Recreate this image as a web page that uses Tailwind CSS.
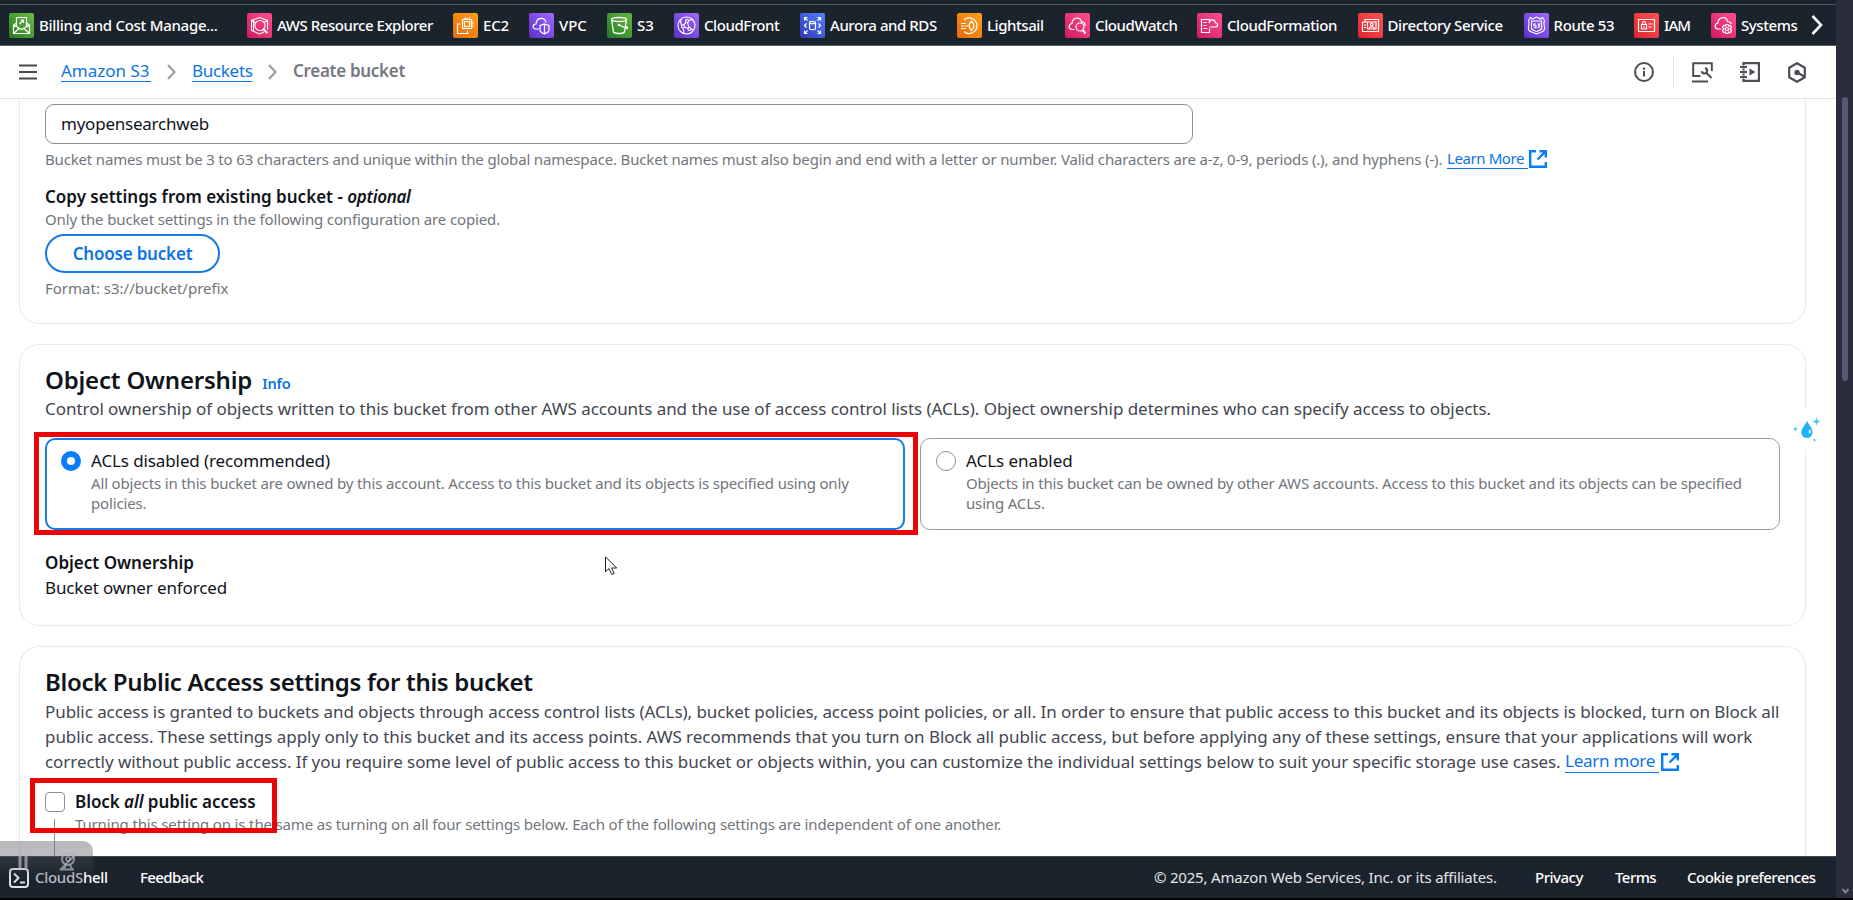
<!DOCTYPE html>
<html lang="en">
<head>
<meta charset="utf-8">
<title>Create bucket - S3</title>
<script src="https://cdn.jsdelivr.net/npm/@tailwindcss/browser@4"></script>
</head>
<body class="w-[1853px] h-[900px] overflow-hidden bg-black font-['Noto_Sans',sans-serif] text-[#0f141a]">
<div class="relative flex h-[900px]">
<div class="flex w-[1836px] flex-col">

<!-- Favourites bar -->
<nav class="flex h-[46px] shrink-0 flex-col border-b border-[#5a626b] bg-[#1b232d]">
  <div class="h-[5px] border-b border-[#525a64] bg-[#1a222c]"></div>
  <div class="flex flex-1 items-center pl-[9px] text-[15px] font-medium leading-none text-white whitespace-nowrap">
    <div class="flex w-[238px] shrink-0 items-center gap-[5px]">
      <svg class="size-[25px] shrink-0 rounded-[2px] bg-linear-to-tr from-[#277a24] to-[#6dbd48]" viewBox="0 0 25 25" fill="none" stroke="#fff" stroke-width="1.2"><path d="M7.500 13V4.500h10V13M7.500 10l-3 2v8.500h16V12l-3-2M4.500 12l8 4.500 8-4.500M4.500 20.500l5.500-5M20.500 20.500l-5.500-5M10.500 11l4-4M11.500 7h3v3"/></svg>
      <span class="tracking-[-0.28px]">Billing and Cost Manage...</span>
    </div>
    <div class="flex w-[206px] shrink-0 items-center gap-[5px]">
      <svg class="size-[25px] shrink-0 rounded-[2px] bg-linear-to-tr from-[#d01462] to-[#ff4f8b]" viewBox="0 0 25 25" fill="none" stroke="#fff" stroke-width="1.100"><path d="M17 19l-4.500 2-8-3.500v-10l8-3 8 3v9M4.500 7.500l4 2M20.500 7.500l-3 1.500M6.500 6.500v12"/><circle cx="13" cy="12.500" r="5"/><path d="M16 16l4.500 4" stroke-width="2"/></svg>
      <span class="tracking-[-0.45px]">AWS Resource Explorer</span>
    </div>
    <div class="flex w-[76px] shrink-0 items-center gap-[5px]">
      <svg class="size-[25px] shrink-0 rounded-[2px] bg-linear-to-tr from-[#e8680a] to-[#ffa11a]" viewBox="0 0 25 25" fill="none" stroke="#fff" stroke-width="1.200"><path d="M9.500 6.500h9v9h-9zM11.500 8.500h5v5h-5zM12 4.500v2M14 4.500v2M16.500 4.500v2M18.500 9h2M18.500 11h2M18.500 13.500h2M7.500 11h-3v9.500h10v-3"/></svg>
      <span class="tracking-[-0.2px]">EC2</span>
    </div>
    <div class="flex w-[78px] shrink-0 items-center gap-[5px]">
      <svg class="size-[25px] shrink-0 rounded-[2px] bg-linear-to-tr from-[#5a30c4] to-[#a468ff]" viewBox="0 0 25 25" fill="none" stroke="#fff" stroke-width="1.200"><path d="M10 16H6.500c-3.500-.500-3-5 .500-5 .500-7 9-7.500 10-1.500"/><path d="M15.500 11l4.500 1.500v4.500c0 2-2 3-4.500 4-2.500-1-4.500-2-4.500-4v-4.500zM15.500 11v10"/></svg>
      <span class="tracking-[-0.1px]">VPC</span>
    </div>
    <div class="flex w-[67px] shrink-0 items-center gap-[5px]">
      <svg class="size-[25px] shrink-0 rounded-[2px] bg-linear-to-tr from-[#1f7a26] to-[#66b83f]" viewBox="0 0 25 25" fill="none" stroke="#fff" stroke-width="1.300"><ellipse cx="12" cy="6.500" rx="7.500" ry="2"/><path d="M4.500 6.500l2 12.500c1.500 2 9.500 2 11 0l2-12.500M12 12l8 3.500c1.500-.500-.500-2-1.500-2.500"/><circle cx="12" cy="12" r=".7" fill="#fff"/></svg>
      <span>S3</span>
    </div>
    <div class="flex w-[126px] shrink-0 items-center gap-[5px]">
      <svg class="size-[25px] shrink-0 rounded-[2px] bg-linear-to-tr from-[#5a30c4] to-[#a468ff]" viewBox="0 0 25 25" fill="none" stroke="#fff" stroke-width="1.100"><circle cx="12.500" cy="12.500" r="8.500"/><circle cx="13" cy="8" r="1.500"/><circle cx="9" cy="13.500" r="1.500"/><circle cx="15.500" cy="16" r="1.500"/><path d="M12 9.500l-2.500 2.500M13.500 9.500l1.500 5M10.500 14l3.500 1.500M7 6.500c-1 4 0 5 1 6M18.500 6.500l-4 1M10 20l-1-5M19.500 17l-2.500-1"/></svg>
      <span class="tracking-[-0.44px]">CloudFront</span>
    </div>
    <div class="flex w-[157px] shrink-0 items-center gap-[5px]">
      <svg class="size-[25px] shrink-0 rounded-[2px] bg-linear-to-tr from-[#3334b9] to-[#5283ff]" viewBox="0 0 25 25" fill="none" stroke="#fff" stroke-width="1.200"><path d="M4.500 7.500v-3h3M4.500 4.500l3 3M17.500 4.500h3v3M20.500 4.500l-3 3M4.500 17.500v3h3M4.500 20.500l3-3M17.500 20.500h3v-3M20.500 20.500l-3-3M6.500 10.500l-2 2 2 2M18.500 10.500l2 2-2 2M9.500 9.500v6c0 1.500 6 1.500 6 0v-6"/><ellipse cx="12.500" cy="9.500" rx="3" ry="1.200"/></svg>
      <span class="tracking-[-0.44px]">Aurora and RDS</span>
    </div>
    <div class="flex w-[108px] shrink-0 items-center gap-[5px]">
      <svg class="size-[25px] shrink-0 rounded-[2px] bg-linear-to-tr from-[#e8680a] to-[#ffa11a]" viewBox="0 0 25 25" fill="none" stroke="#fff" stroke-width="1.200"><path d="M7 7a7.800 7.800 0 1 1 0 11.500M4 10.500h5M4 13h3M8 13h3M4 15.500h5M14.500 8c-3 3-3 6.500 0 9.500 3-3 3-6.500 0-9.500z"/></svg>
      <span class="tracking-[-0.44px]">Lightsail</span>
    </div>
    <div class="flex w-[132px] shrink-0 items-center gap-[5px]">
      <svg class="size-[25px] shrink-0 rounded-[2px] bg-linear-to-tr from-[#d01462] to-[#ff4f8b]" viewBox="0 0 25 25" fill="none" stroke="#fff" stroke-width="1.200"><path d="M9.500 16.500H7c-4-.500-3.500-5.500 0-6 0-6.500 8.500-7 9.500-1.500 2.500-.500 4 1.500 3.500 4"/><circle cx="15" cy="14" r="4"/><path d="M17.500 17l3 3.500" stroke-width="2"/></svg>
      <span class="tracking-[-0.39px]">CloudWatch</span>
    </div>
    <div class="flex w-[160.5px] shrink-0 items-center gap-[5px]">
      <svg class="size-[25px] shrink-0 rounded-[2px] bg-linear-to-tr from-[#d01462] to-[#ff4f8b]" viewBox="0 0 25 25" fill="none" stroke="#fff" stroke-width="1.200"><path d="M10 6.500H4.500v13h8v-4M12.500 10V6.500H10M6.500 9.500h3M6.500 12.500h3M6.500 15.500h4"/><path d="M12.500 14h6c3-.500 2.500-4 0-4-.500-4.500-6-4-6.500 0"/></svg>
      <span class="tracking-[-0.44px]">CloudFormation</span>
    </div>
    <div class="flex w-[166px] shrink-0 items-center gap-[5px]">
      <svg class="size-[25px] shrink-0 rounded-[2px] bg-linear-to-tr from-[#e0212f] to-[#ff5252]" viewBox="0 0 25 25" fill="none" stroke="#fff" stroke-width="1.200"><path d="M7 9V6.500h13.500v12H4.500V9H9M9.500 9h8.500v7h-8.500zM6 12h2M6 14.500h2M4.500 18.500h16"/><circle cx="13.700" cy="11.500" r="1.300"/><path d="M11 16c.500-3 5-3 5.500 0"/></svg>
      <span class="tracking-[-0.35px]">Directory Service</span>
    </div>
    <div class="flex w-[110.5px] shrink-0 items-center gap-[5px]">
      <svg class="size-[25px] shrink-0 rounded-[2px] bg-linear-to-tr from-[#5a30c4] to-[#a468ff]" viewBox="0 0 25 25" fill="none" stroke="#fff" stroke-width="1.100"><path d="M6.500 4.500l2 1.500 4-2 4 2 2-1.500 2 3c-2 4 1 6 0 9-1 3-5 2.500-8 4.500-3-2-7-1.500-8-4.500-1-3 2-5 0-9z"/><path d="M7.500 8h10c-1 4 1 5.500 0 8-1.500 1.500-3 1.500-5 2.500-2-1-3.500-1-5-2.500-1-2.500 1-4 0-8z"/><path d="M12 11h-2.200v1.700H12v2H9.700M13.500 11h2l-1 1.500c1.500 0 1.500 2.200-1 2.200"/></svg>
      <span class="tracking-[-0.35px]">Route 53</span>
    </div>
    <div class="flex w-[77px] shrink-0 items-center gap-[5px]">
      <svg class="size-[25px] shrink-0 rounded-[2px] bg-linear-to-tr from-[#e0212f] to-[#ff5252]" viewBox="0 0 25 25" fill="none" stroke="#fff" stroke-width="1.200"><path d="M4.500 6.500h16v12h-16zM7.500 11.500h5v4.500h-5zM8.500 11.500v-1.500c0-2 3-2 3 0v1.500M10 13v1.500M14.500 11h4M14.500 14h3"/></svg>
      <span class="tracking-[-0.9px]">IAM</span>
    </div>
    <div class="flex w-[100px] shrink-0 items-center gap-[5px]">
      <svg class="size-[25px] shrink-0 rounded-[2px] bg-linear-to-tr from-[#d01462] to-[#ff4f8b]" viewBox="0 0 25 25" fill="none" stroke="#fff" stroke-width="1.200"><path d="M10 16H7c-4-.500-3.500-5.500 0-6 0-6.500 8.500-7 9.500-1.500 2 0 3.500 1 3.500 2.500"/><circle cx="16" cy="16" r="1.500"/><path d="M15 11.500h2l.500 1.500 2-.500 1 2-1.500 1.500 1.500 1.500-1 2-2-.500-.500 1.500h-2l-.500-1.500-2 .500-1-2 1.500-1.500-1.500-1.500 1-2 2 .500z"/></svg>
      <span class="tracking-[-0.43px]">Systems</span>
    </div>
    <svg class="h-[20px] w-[12px] shrink-0" viewBox="0 0 12 20" fill="none" stroke="#fff" stroke-width="2.600"><path d="M1.500 1l8.500 9-8.500 9"/></svg>
  </div>
</nav>

<!-- Breadcrumb bar -->
<header class="flex h-[53px] shrink-0 items-center justify-between border-b border-[#e4e4e6] bg-white">
  <div class="flex items-center text-[17px] leading-[21px] text-[#0b74e6]">
    <svg class="ml-[19px] mr-[24px] size-[18px]" viewBox="0 0 18 18" stroke="#45484f" stroke-width="2.200"><path d="M0 2.500h18M0 9h18M0 15.500h18"/></svg>
    <a class="mb-[2px] w-[90px] border-b border-[#0b74e6] whitespace-nowrap">Amazon S3</a>
    <svg class="mx-[16px] h-[16px] w-[9px]" viewBox="0 0 9 16" fill="none" stroke="#9b9ea4" stroke-width="2.200"><path d="M1 1l6.500 7L1 15"/></svg>
    <a class="mb-[2px] w-[60px] border-b border-[#0b74e6] tracking-[-0.3px] whitespace-nowrap">Buckets</a>
    <svg class="mx-[16px] h-[16px] w-[9px]" viewBox="0 0 9 16" fill="none" stroke="#9b9ea4" stroke-width="2.200"><path d="M1 1l6.500 7L1 15"/></svg>
    <span class="mb-[3px] font-semibold tracking-[-0.3px] text-[#75787f]">Create bucket</span>
  </div>
  <div class="flex items-center pr-[30px]">
    <svg class="mr-[19px] size-[20px]" viewBox="0 0 20 20" fill="none" stroke="#4b4e55" stroke-width="2"><circle cx="10" cy="10" r="9"/><path d="M10 9v5.500M10 5.500v2.200"/></svg>
    <div class="h-[31px] w-px bg-[#e4e4e6]"></div>
    <svg class="ml-[18px] size-[21px]" viewBox="0 0 21 21" fill="none" stroke="#4b4e55" stroke-width="2"><path d="M8.500 14H1.200V1.200h18.600V9M0 19.500h16M19.500 16l-5-5"/><path d="M13 6.200c2.800.500 3 5.300-.500 5.300-1.500 0-2.500-.800-2.800-2.200" stroke-width="2.200"/></svg>
    <svg class="ml-[27px] size-[20px]" viewBox="0 0 20 20" fill="none" stroke="#4b4e55" stroke-width="2.200"><path d="M3.500 3.500V1.100H18.900v17.800H3.500v-2.500M3.500 6.500v2M3.500 11.500v2M0 5h7M0 10h7M0 15h7"/><path d="M9.500 6.500l6 3.500-6 3.500z" fill="#4b4e55" stroke="none"/></svg>
    <svg class="ml-[28px] h-[21px] w-[18px]" viewBox="0 0 18 21" fill="none" stroke="#4b4e55" stroke-width="2.200"><path d="M9 1.200l7.800 4.500v9.600L9 19.800l-7.800-4.500V5.700z"/><circle cx="9" cy="10.500" r="2.700" fill="#4b4e55" stroke="none"/><path d="M9.500 10.500l6.500 4"/></svg>
  </div>
</header>

<main class="flex h-[757px] shrink-0 flex-col overflow-hidden bg-white pl-[19px] pr-[30px]">
  <!-- General configuration -->
  <section class="h-[225px] shrink-0 rounded-b-[20px] border border-t-0 border-[#e9eaec] px-[25px] pt-[5px]">
    <div class="flex h-[40px] w-[1148px] items-center rounded-[9px] border border-[#8c8c94] px-[15px] text-[17px] tracking-[-0.23px]">myopensearchweb</div>
    <p class="mt-[4px] flex items-center whitespace-nowrap text-[15px] leading-[20px] text-[#72757c]">
      <span class="mr-[5px] w-[1397px] tracking-[-0.165px]">Bucket names must be 3 to 63 characters and unique within the global namespace. Bucket names must also begin and end with a letter or number. Valid characters are a-z, 0-9, periods (.), and hyphens (-).</span>
      <a class="w-[81px] border-b border-[#0b74e6] tracking-[-0.41px] text-[#0b74e6]">Learn More</a>
      <svg class="ml-px size-[18px]" viewBox="0 0 18 18" fill="none" stroke="#067dfa" stroke-width="2.400"><path d="M7 1.200H1.200v15.600h15.600V12M10.500 1.200h6.300v6.300M16.500 1.500L8.500 9.500"/></svg>
    </p>
    <h3 class="mt-[15px] text-[17px] font-semibold leading-[25px]">Copy settings from existing bucket - <i class="tracking-[-0.3px]">optional</i></h3>
    <p class="text-[15px] leading-[20px] tracking-[-0.14px] text-[#72757c]">Only the bucket settings in the following configuration are copied.</p>
    <button class="mt-[5px] flex h-[39px] w-[175px] items-center justify-center rounded-full border-2 border-[#147ae8] text-[17px] font-semibold tracking-[-0.2px] text-[#0b74e6]">Choose bucket</button>
    <p class="mt-[5px] text-[15px] leading-[20px] text-[#72757c]">Format: s3://bucket/prefix</p>
  </section>

  <!-- Object ownership -->
  <section class="mt-[20px] h-[282px] shrink-0 rounded-[20px] border border-[#e9eaec] px-[25px] pt-[20px]">
    <div class="flex h-[30px] items-baseline gap-[10px] leading-[30px]">
      <h2 class="text-[24px] font-semibold tracking-[-0.2px]">Object Ownership</h2>
      <a class="text-[14.5px] font-semibold tracking-[-0.1px] text-[#0b74e6]">Info</a>
    </div>
    <p class="mt-[1px] whitespace-nowrap text-[17px] leading-[25px] tracking-[-0.043px] text-[#424650]">Control ownership of objects written to this bucket from other AWS accounts and the use of access control lists (ACLs). Object ownership determines who can specify access to objects.</p>
    <div class="mt-[17px] flex gap-[15px]">
      <div class="flex h-[92px] w-[860px] gap-[10px] rounded-[10px] border-2 border-[#147ae8] bg-white pl-[14px] pt-[9px]">
        <span class="mt-[2px] size-[20px] shrink-0 rounded-full border-[6px] border-[#067dfa] bg-white"></span>
        <div class="whitespace-nowrap">
          <p class="text-[17px] leading-[24px] tracking-[-0.11px]">ACLs disabled (recommended)</p>
          <p class="text-[15px] leading-[20px] tracking-[-0.155px] text-[#72757c]">All objects in this bucket are owned by this account. Access to this bucket and its objects is specified using only<br>policies.</p>
        </div>
      </div>
      <div class="flex h-[92px] w-[860px] gap-[10px] rounded-[10px] border border-[#9a9ca2] pl-[15px] pt-[10px]">
        <span class="mt-[2px] size-[20px] shrink-0 rounded-full border border-[#8c8c94]"></span>
        <div class="whitespace-nowrap">
          <p class="text-[17px] leading-[24px] tracking-[-0.05px]">ACLs enabled</p>
          <p class="text-[15px] leading-[20px] tracking-[-0.165px] text-[#72757c]">Objects in this bucket can be owned by other AWS accounts. Access to this bucket and its objects can be specified<br>using ACLs.</p>
        </div>
      </div>
    </div>
    <h3 class="mt-[20px] text-[17px] font-semibold leading-[25px]">Object Ownership</h3>
    <p class="text-[17px] leading-[25px] tracking-[-0.14px]">Bucket owner enforced</p>
  </section>

  <!-- Block public access -->
  <section class="mt-[20px] h-[260px] shrink-0 rounded-t-[20px] border border-b-0 border-[#e9eaec] px-[25px] pt-[20px]">
    <h2 class="text-[24px] font-semibold leading-[30px] tracking-[-0.33px]">Block Public Access settings for this bucket</h2>
    <div class="mt-[2px] whitespace-nowrap text-[17px] leading-[25px] text-[#424650]">
      <p class="tracking-[-0.065px]">Public access is granted to buckets and objects through access control lists (ACLs), bucket policies, access point policies, or all. In order to ensure that public access to this bucket and its objects is blocked, turn on Block all</p>
      <p class="tracking-[-0.045px]">public access. These settings apply only to this bucket and its access points. AWS recommends that you turn on Block all public access, but before applying any of these settings, ensure that your applications will work</p>
      <p class="flex items-center"><span class="mr-[5px] w-[1515px] tracking-[-0.06px]">correctly without public access. If you require some level of public access to this bucket or objects within, you can customize the individual settings below to suit your specific storage use cases.</span><a class="w-[94px] border-b border-[#0b74e6] leading-[22px] tracking-[-0.24px] text-[#0b74e6]">Learn more</a><svg class="ml-[2px] size-[18px]" viewBox="0 0 18 18" fill="none" stroke="#067dfa" stroke-width="2.400"><path d="M7 1.200H1.200v15.600h15.600V12M10.500 1.200h6.300v6.300M16.500 1.500L8.500 9.500"/></svg></p>
    </div>
    <div class="mt-[15px] flex gap-[10px]">
      <div class="flex w-[20px] flex-col">
        <span class="mt-[3px] size-[20px] shrink-0 rounded-[4px] border border-[#8c8c94] bg-white"></span>
        <span class="ml-[9px] mt-[7px] h-[60px] w-px bg-[#8c8c94]"></span>
      </div>
      <div>
        <h3 class="text-[17px] font-semibold leading-[25px] tracking-[-0.06px]">Block <i>all</i> public access</h3>
        <p class="text-[15px] leading-[20px] tracking-[-0.15px] text-[#72757c]">Turning this setting on is the same as turning on all four settings below. Each of the following settings are independent of one another.</p>
      </div>
    </div>
  </section>
</main>

<!-- Footer -->
<footer class="flex h-[42px] shrink-0 items-center justify-between whitespace-nowrap border-t border-[#424650] bg-[#1b232d] pl-[9px] pr-[20px] text-[15px] font-medium text-white">
  <div class="flex items-center">
    <svg class="size-[20px]" viewBox="0 0 20 20" fill="none" stroke="#dfe2e6" stroke-width="2"><rect x="1" y="1" width="18" height="18" rx="3"/><path d="M5 5.500l4.500 4.500L5 14.500M11 14.500h5"/></svg>
    <span class="ml-[6px] w-[73px] tracking-[-0.3px] text-[#b9bdc3]">CloudS<span class="text-white">hell</span></span>
    <span class="ml-[32px] tracking-[-0.6px]">Feedback</span>
  </div>
  <div class="flex items-center">
    <span class="w-[343px] font-normal tracking-[-0.2px] text-[#e4e6e9]">© 2025, Amazon Web Services, Inc. or its affiliates.</span>
    <span class="ml-[38px] w-[48px] tracking-[-0.5px]">Privacy</span>
    <span class="ml-[32px] w-[41px] tracking-[-0.55px]">Terms</span>
    <span class="ml-[31px] w-[129px] tracking-[-0.53px]">Cookie preferences</span>
  </div>
</footer>
</div>

<!-- Window edge with the page scrollbar -->
<aside class="flex h-[898px] w-[17px] flex-col justify-between bg-[#2a2e3c] pl-[6px]">
  <div class="mt-[97px] h-[284px] w-[6px] rounded-full bg-[#565a78]"></div>
  <svg class="mb-[4px] h-[6px] w-[7px]" viewBox="0 0 7 6" fill="none" stroke="#7c8090" stroke-width="2"><path d="M.5 1l3 3.500 3-3.500"/></svg>
</aside>

<!-- Highlight frames -->
<div class="absolute left-[34px] top-[432px] h-[103px] w-[884px] border-[5px] border-[#ea0606]"></div>
<div class="absolute left-[30px] top-[778px] h-[55px] w-[247px] border-[5px] border-[#ea0606]"></div>

<!-- Droplet assistant badge -->
<div class="absolute left-[1790px] top-[408px] flex h-[42px] w-[34px] items-center justify-center bg-white">
  <svg class="h-[42px] w-[34px]" viewBox="0 0 34 42"><path d="M17 13c1.500 3.500 5.500 6.500 5.500 11.500a5.600 5.600 0 0 1-11.200 0C11.300 20 15.500 17 17 13z" fill="#1fb4f8"/><ellipse cx="19.800" cy="23.500" rx="1.200" ry="2" fill="#d5f3ff"/><path d="M26.500 9.500l1 3 3 1-3 1-1 3-1-3-3-1 3-1zM5.500 18.500l.7 1.800 1.800.7-1.800.7-.7 1.800-.7-1.800L3 21l1.800-.7zM24.500 30l.5 1.500 1.500.5-1.500.5-.5 1.500-.5-1.500-1.500-.5 1.500-.5z" fill="#35c3f8"/></svg>
</div>

<!-- Mouse pointer -->
<svg class="absolute left-[605px] top-[556px] h-[20px] w-[13px]" viewBox="0 0 13 20" fill="#fff" stroke="#222" stroke-width="1"><path d="M.5 .8v15l3.500-3.300 2.800 6 2.400-1.200L6.600 12h5.100z"/></svg>

<!-- Fading recorder toolbar -->
<div class="absolute left-0 top-[841px] h-[38px] w-[93px] rounded-tr-[10px] bg-linear-to-b from-[#70737880] via-[#50535960] via-40% to-[#30333800]">
  <svg class="h-[38px] w-[93px]" viewBox="0 0 93 38" fill="none" stroke="#aeb2b8" stroke-opacity=".75"><path d="M20 14v13M26 14v13" stroke-width="3"/><circle cx="68" cy="18" r="6" stroke-width="2"/><circle cx="68" cy="18" r="2" stroke-width="1.500"/><path d="M61 28.500h13M66 24l-2 4M70 24l2 4M60 29l16-16" stroke-width="1.800"/></svg>
</div>
</div>
</body>
</html>
